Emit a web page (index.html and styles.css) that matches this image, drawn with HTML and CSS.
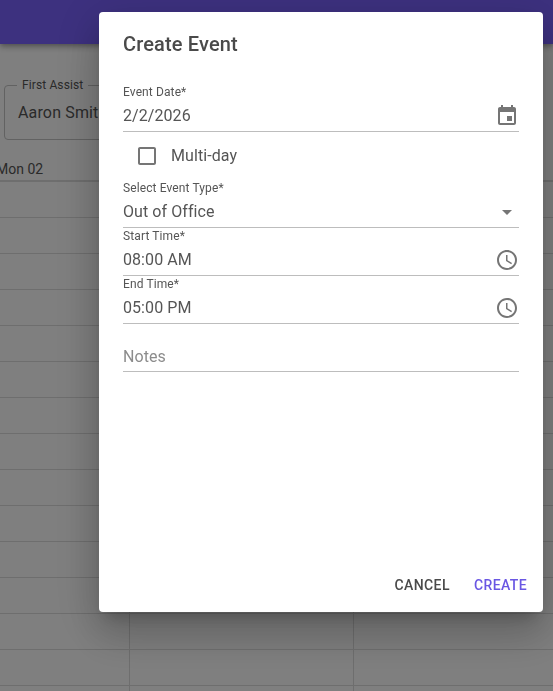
FILE: index.html
```html
<!DOCTYPE html>
<html lang="en">
<head>
<meta charset="utf-8">
<title>Create Event</title>
<link rel="stylesheet" href="styles.css">
</head>
<body>
<div class="page">
  <header class="appbar"></header>
  <section class="filters">
    <fieldset class="outlined">
      <legend>First Assist</legend>
      <span class="outlined-value">Aaron Smith</span>
    </fieldset>
  </section>
  <div class="schedule">
    <div class="day-head">Mon 02</div>
    <div class="grid-row"></div><div class="grid-row"></div><div class="grid-row"></div><div class="grid-row"></div>
    <div class="grid-row"></div><div class="grid-row"></div><div class="grid-row"></div><div class="grid-row"></div>
    <div class="grid-row"></div><div class="grid-row"></div><div class="grid-row"></div>
    <div class="grid-row cols"><i></i><i></i></div>
    <div class="grid-row cols"><i></i><i></i></div>
    <div class="grid-row cols"><i></i><i></i></div>
    <div class="grid-row cols"><i></i><i></i></div>
  </div>
</div>
<div class="backdrop"></div>
<div class="dialog" role="dialog">
  <h2 class="dialog-title">Create Event</h2>
  <div class="dialog-body">
    <div class="field">
      <label class="field-label">Event Date*</label>
      <div class="field-control">
        <span class="field-value">2/2/2026</span>
        <svg class="icon" viewBox="0 0 24 24"><path d="M17 12h-5v5h5v-5zM16 1v2H8V1H6v2H5c-1.11 0-1.99.9-1.99 2L3 19c0 1.1.89 2 2 2h14c1.1 0 2-.9 2-2V5c0-1.1-.9-2-2-2h-1V1h-2zm3 18H5V8h14v11z"/></svg>
      </div>
    </div>
    <div class="check-row">
      <svg class="check-icon" viewBox="0 0 24 24"><path d="M19 5v14H5V5h14m0-2H5c-1.1 0-2 .9-2 2v14c0 1.1.9 2 2 2h14c1.1 0 2-.9 2-2V5c0-1.1-.9-2-2-2z"/></svg>
      <span class="check-label">Multi-day</span>
    </div>
    <div class="field">
      <label class="field-label">Select Event Type*</label>
      <div class="field-control">
        <span class="field-value">Out of Office</span>
        <svg class="icon arrow" viewBox="0 0 24 24"><path d="M7 10l5 5 5-5z"/></svg>
      </div>
    </div>
    <div class="field">
      <label class="field-label">Start Time*</label>
      <div class="field-control">
        <span class="field-value">08:00 AM</span>
        <svg class="icon" viewBox="0 0 24 24"><path d="M11.99 2C6.47 2 2 6.48 2 12s4.47 10 9.99 10C17.52 22 22 17.52 22 12S17.52 2 11.99 2zM12 20c-4.42 0-8-3.58-8-8s3.58-8 8-8 8 3.58 8 8-3.58 8-8 8z"/><path d="M12.5 7H11v6l5.25 3.15.75-1.23-4.5-2.67z"/></svg>
      </div>
    </div>
    <div class="field">
      <label class="field-label">End Time*</label>
      <div class="field-control">
        <span class="field-value">05:00 PM</span>
        <svg class="icon" viewBox="0 0 24 24"><path d="M11.99 2C6.47 2 2 6.48 2 12s4.47 10 9.99 10C17.52 22 22 17.52 22 12S17.52 2 11.99 2zM12 20c-4.42 0-8-3.58-8-8s3.58-8 8-8 8 3.58 8 8-3.58 8-8 8z"/><path d="M12.5 7H11v6l5.25 3.15.75-1.23-4.5-2.67z"/></svg>
      </div>
    </div>
    <div class="field">
      <div class="field-label"></div>
      <div class="field-control">
        <span class="field-value placeholder">Notes</span>
      </div>
    </div>
  </div>
  <div class="dialog-actions">
    <button class="btn" type="button">Cancel</button>
    <button class="btn primary" type="button">Create</button>
  </div>
</div>
</body>
</html>
```
FILE: styles.css
```css
* { box-sizing: border-box; }
html, body { margin: 0; height: 100%; overflow: hidden; }
body { font-family: Roboto, "Liberation Sans", sans-serif; color: #4a4a4a; background: #fff; }

.page { height: 691px; overflow: hidden; }
.appbar { height: 44px; background: #7a62ff; box-shadow: 0 2px 4px -1px rgba(0,0,0,.2), 0 4px 5px rgba(0,0,0,.14), 0 1px 10px rgba(0,0,0,.12); }
.filters { height: 113px; padding: 34px 0 0 4px; }
.outlined { margin: 0; width: 260px; height: 62px; padding: 0 13px; border: 1px solid #c4c4c4; border-radius: 4px; }
.outlined legend { padding: 0 5px; margin-left: -1px; font-size: 12px; line-height: 14px; letter-spacing: .00938em; color: #555; }
.outlined-value { display: block; margin-top: 9px; font-size: 16px; line-height: 24px; letter-spacing: .00938em; color: #555; }

.day-head { height: 25px; margin-left: -4px; padding-top: 2px; font-size: 14px; line-height: 20px; color: #555; border-bottom: 2px solid #ddd; }
.grid-row { height: 36px; border-bottom: 1px solid #ddd; position: relative; }
.grid-row.cols i { position: absolute; top: -1px; bottom: -1px; left: 129px; width: 1px; background: #ddd; }
.grid-row.cols i + i { left: 353px; }

.backdrop { position: fixed; inset: 0; background: rgba(0,0,0,.5); }

.dialog {
  position: fixed; left: 99px; top: 12px; width: 444px; height: 600px;
  display: flex; flex-direction: column;
  background: #fff; border-radius: 4px;
  box-shadow: 0 11px 15px -7px rgba(0,0,0,.2), 0 24px 38px 3px rgba(0,0,0,.14), 0 9px 46px 8px rgba(0,0,0,.12);
}
.dialog-title { margin: 0; padding: 16px 24px; font-size: 20px; line-height: 32px; font-weight: 500; letter-spacing: .0075em; color: #4a4a4a; }
.dialog-body { flex: 1; padding: 8px 24px 0; }

.field { height: 48px; display: flex; flex-direction: column; }
.field-label { height: 14px; font-size: 12px; line-height: 16px; letter-spacing: .00938em; color: #555; }
.field-control { flex: 1; display: flex; align-items: center; justify-content: space-between; border-bottom: 1px solid #bdbdbd; padding-top: 3px; }
.field-value { font-size: 16px; line-height: 24px; letter-spacing: .07px; color: #555; }
.field-value.placeholder { margin-top: 2px; color: #8c8c8c; }

.icon { width: 24px; height: 24px; fill: #757575; display: block; flex: none; }
.check-row { height: 48px; display: flex; align-items: center; padding-left: 12px; gap: 12px; }
.check-icon { width: 24px; height: 24px; fill: #757575; flex: none; }
.check-label { font-size: 16px; line-height: 24px; letter-spacing: .07px; color: #555; }

.dialog-actions { display: flex; justify-content: flex-end; gap: 8px; padding: 7px 8px 9px; }
.btn { border: 0; background: none; padding: 6px 8px; font: 500 14px/24px Roboto, "Liberation Sans", sans-serif; letter-spacing: .02857em; text-transform: uppercase; color: #4a4a4a; }
.btn.primary { color: #6a57e3; }
```
